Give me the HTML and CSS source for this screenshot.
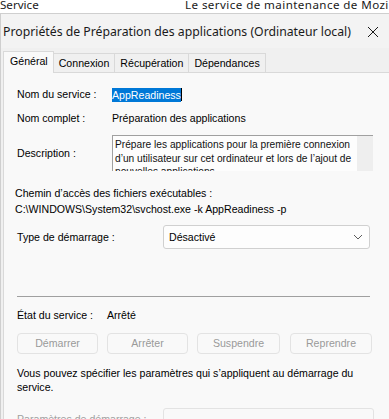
FILE: index.html
```html
<!DOCTYPE html>
<html lang="fr">
<head>
<meta charset="utf-8">
<link rel="stylesheet" href="styles.css">
</head>
<body>
<div class="bgrow">
  <span class="bg-a">Service</span>
  <span class="bg-b">Le service de maintenance de Mozilla</span>
</div>
<div class="dialog">
  <div class="titlebar">
    <span class="title">Propriétés de Préparation des applications (Ordinateur local)</span>
    <svg class="close" width="12" height="12" viewBox="0 0 12 12"><path d="M1 1 L11 11 M11 1 L1 11" stroke="#1a1a1a" stroke-width="1" fill="none"/></svg>
  </div>
  <div class="tabs">
    <div class="tab active">Général</div>
    <div class="tab">Connexion</div>
    <div class="tab">Récupération</div>
    <div class="tab">Dépendances</div>
  </div>
  <div class="panel">
    <div class="row r-name">
      <span class="label">Nom du service :</span>
      <span class="value"><span class="sel">AppReadiness</span><span class="caret"></span></span>
    </div>
    <div class="row r-full">
      <span class="label">Nom complet :</span>
      <span class="value">Préparation des applications</span>
    </div>
    <div class="row r-desc">
      <span class="label">Description :</span>
      <div class="descbox">
        <div class="desctext">Prépare les applications pour la première connexion d’un utilisateur sur cet ordinateur et lors de l’ajout de nouvelles applications.</div>
        <div class="scroll"></div>
      </div>
    </div>
    <div class="path-label">Chemin d’accès des fichiers exécutables :</div>
    <div class="path">C:\WINDOWS\System32\svchost.exe -k AppReadiness -p</div>
    <div class="row r-type">
      <span class="label">Type de démarrage :</span>
      <div class="combo">
        <span>Désactivé</span>
        <svg width="10" height="6" viewBox="0 0 10 6"><path d="M1 1 L5 5 L9 1" stroke="#5c5c5c" stroke-width="1" fill="none"/></svg>
      </div>
    </div>
    <div class="sep"></div>
    <div class="row r-state">
      <span class="label state-l">État du service :</span>
      <span>Arrêté</span>
    </div>
    <div class="buttons">
      <div class="btn">Démarrer</div>
      <div class="btn">Arrêter</div>
      <div class="btn">Suspendre</div>
      <div class="btn">Reprendre</div>
    </div>
    <div class="note">Vous pouvez spécifier les paramètres qui s’appliquent au démarrage du service.</div>
    <div class="row r-params">
      <span class="label disabled">Paramètres de démarrage :</span>
      <div class="param-input"></div>
    </div>
  </div>
</div>
</body>
</html>
```
FILE: styles.css
```css
html, body {
  margin: 0;
  padding: 0;
  background: #ffffff;
  overflow: hidden;
}
body {
  width: 389px;
  height: 419px;
  font-family: "Liberation Sans", Arial, sans-serif;
  font-size: 10.6px;
  color: #000;
}
.bgrow {
  height: 13px;
  overflow: hidden;
  display: flex;
  font-family: "Noto Sans", "Open Sans", sans-serif;
  font-size: 11.6px;
  line-height: 12px;
  color: #1a1a1a;
  white-space: nowrap;
}
.bg-a {
  width: 185px;
  margin-top: -1px;
  flex: none;
}
.bg-b {
  margin-top: -1px;
  letter-spacing: 0.42px;
}
.dialog {
  border-top: 1px solid #cfcfcf;
  border-left: 1px solid #cfcfcf;
  background: #f0f0f0;
  height: 420px;
}
.titlebar {
  height: 34px;
  display: flex;
  align-items: center;
  justify-content: space-between;
  padding: 0 10px 0 2px;
  background: #f3f3f3;
}
.title {
  font-family: "Noto Sans", "Open Sans", sans-serif;
  font-size: 12.25px;
  color: #1a1a1a;
  white-space: nowrap;
}
.close {
  margin-top: 1px;
}
.tabs {
  display: flex;
  align-items: flex-end;
  height: 22px;
  padding: 0 0 0 2px;
  margin-top: 2px;
  background: #f0f0f0;
}
.tab {
  height: 19px;
  line-height: 18px;
  padding: 0 5px;
  border: 1px solid #d9d9d9;
  border-bottom: none;
  border-left: none;
  background: #f0f0f0;
  box-sizing: border-box;
}
.tab.active {
  height: 22px;
  line-height: 19px;
  background: #f9f9f9;
  border-left: 1px solid #d9d9d9;
  padding: 0 5px 0 6px;
  margin-bottom: -1px;
  position: relative;
  z-index: 1;
}
.panel {
  border-top: 1px solid #d9d9d9;
  border-left: 1px solid #d9d9d9;
  margin-left: 2px;
  background: #f9f9f9;
  padding: 6px 0 0 13px;
  height: 360px;
  width: 400px;
  box-sizing: border-box;
}
.row {
  display: flex;
  align-items: center;
}
.label {
  width: 95px;
  flex: none;
}
.r-name {
  height: 30px;
}
.sel {
  background: #0078d7;
  color: #fff;
  padding: 1px 0;
}
.caret {
  display: inline-block;
  width: 1px;
  height: 13px;
  background: #000;
  vertical-align: -2px;
}
.r-full {
  height: 16px;
  margin-top: 1px;
  margin-bottom: 9px;
}
.r-desc {
  align-items: flex-start;
}
.r-desc .label {
  padding-top: 12px;
}
.descbox {
  display: flex;
  width: 261px;
  height: 36px;
  overflow: hidden;
  border-top: 1px solid #a0a0a0;
  border-left: 1px solid #a0a0a0;
  box-sizing: border-box;
  background: #fdfdfd;
}
.desctext {
  flex: 1;
  padding: 2px 0 2px 2px;
  font-size: 10.2px;
  line-height: 13.5px;
  color: #111;
}
.scroll {
  width: 16px;
  background: #eeeeee;
  flex: none;
}
.path-label {
  margin-top: 14px;
  line-height: 16px;
  margin-left: -2px;
}
.path {
  line-height: 16px;
  margin-left: -2px;
}
.r-type {
  margin-top: 8px;
  height: 24px;
}
.r-type .label {
  width: 146px;
}
.combo {
  width: 207px;
  height: 24px;
  box-sizing: border-box;
  border: 1px solid #d0d0d0;
  border-radius: 3px;
  background: #fdfdfd;
  display: flex;
  align-items: center;
  justify-content: space-between;
  padding: 0 6px 0 5px;
}
.sep {
  width: 353px;
  height: 1px;
  background: #a0a0a0;
  margin-top: 47px;
}
.r-state {
  height: 16px;
  margin-top: 10px;
}
.state-l {
  width: 90px;
}
.buttons {
  display: flex;
  gap: 9px;
  margin-top: 10px;
  width: 355px;
}
.btn {
  width: 81px;
  height: 21px;
  box-sizing: border-box;
  border: 1px solid #e3e3e3;
  border-radius: 4px;
  background: #f9f9f9;
  color: #9a9a9a;
  text-align: center;
  line-height: 19px;
}
.btn:nth-child(3) { width: 83px; }
.btn:nth-child(4) { width: 82px; margin-left: 1px; }
.note {
  margin-top: 12px;
  width: 350px;
  line-height: 14px;
}
.r-params {
  margin-top: 10px;
  align-items: flex-start;
}
.r-params .label {
  width: 146px;
  padding-top: 9px;
}
.disabled {
  color: #a0a0a0;
}
.param-input {
  width: 209px;
  height: 22px;
  border: 1px solid #e3e3e3;
  border-radius: 3px;
  background: #f9f9f9;
  margin-top: 4px;
}
```
